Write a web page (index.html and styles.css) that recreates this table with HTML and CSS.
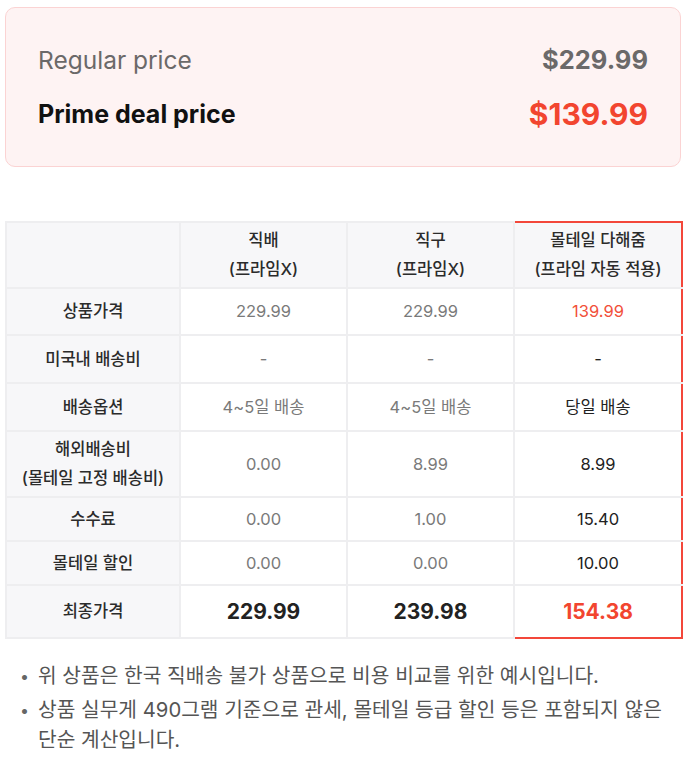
FILE: index.html
```html
<!DOCTYPE html>
<html lang="ko">
<head>
<meta charset="utf-8">
<link rel="stylesheet" href="styles.css">
</head>
<body>
<div class="page">
  <div class="price-box">
    <div class="price-row regular">
      <span class="label">Regular price</span>
      <span class="value">$229.99</span>
    </div>
    <div class="price-row deal">
      <span class="label">Prime deal price</span>
      <span class="value">$139.99</span>
    </div>
  </div>

  <table class="compare">
    <colgroup>
      <col class="c1"><col class="c2"><col class="c3"><col class="c4">
    </colgroup>
    <thead>
      <tr>
        <th class="rh"></th>
        <th>직배<br>(프라임X)</th>
        <th>직구<br>(프라임X)</th>
        <th class="hl">몰테일 다해줌<br>(프라임 자동 적용)</th>
      </tr>
    </thead>
    <tbody>
      <tr class="r1">
        <th class="rh">상품가격</th>
        <td>229.99</td><td>229.99</td><td class="hl red">139.99</td>
      </tr>
      <tr class="r2">
        <th class="rh">미국내 배송비</th>
        <td>-</td><td>-</td><td class="hl">-</td>
      </tr>
      <tr class="r3">
        <th class="rh">배송옵션</th>
        <td>4~5일 배송</td><td>4~5일 배송</td><td class="hl">당일 배송</td>
      </tr>
      <tr class="r4">
        <th class="rh">해외배송비<br>(몰테일 고정 배송비)</th>
        <td>0.00</td><td>8.99</td><td class="hl">8.99</td>
      </tr>
      <tr class="r5">
        <th class="rh">수수료</th>
        <td>0.00</td><td>1.00</td><td class="hl">15.40</td>
      </tr>
      <tr class="r6">
        <th class="rh">몰테일 할인</th>
        <td>0.00</td><td>0.00</td><td class="hl">10.00</td>
      </tr>
      <tr class="r7 total">
        <th class="rh">최종가격</th>
        <td>229.99</td><td>239.98</td><td class="hl red last">154.38</td>
      </tr>
    </tbody>
  </table>

  <ul class="notes">
    <li>위 상품은 한국 직배송 불가 상품으로 비용 비교를 위한 예시입니다.</li>
    <li>상품 실무게 490그램 기준으로 관세, 몰테일 등급 할인 등은 포함되지 않은 단순 계산입니다.</li>
  </ul>
</div>
</body>
</html>
```

FILE: styles.css
```css
* { box-sizing: border-box; }
html, body { margin: 0; padding: 0; background: #ffffff; }
body {
  font-family: Inter, "Noto Sans CJK KR", sans-serif;
  color: #222;
}
.page {
  width: 687px;
  padding: 7px 6px 0 5px;
}
.price-box {
  background: #fef3f3;
  border: 1.5px solid #fbd3d3;
  border-radius: 10px;
  height: 160px;
  padding: 0 32px 0 32px;
  display: flex;
  flex-direction: column;
  justify-content: center;
  gap: 22px;
}
.price-row {
  display: flex;
  justify-content: space-between;
  align-items: center;
  line-height: 32px;
}
.regular .label { font-size: 24.5px; color: #6b6969; font-weight: 400; }
.regular .value { font-size: 25.5px; color: #6b6969; font-weight: 700; }
.deal .label { font-size: 25px; color: #111; font-weight: 700; }
.deal .value { font-size: 30px; color: #f2452f; font-weight: 700; }

.compare {
  margin-top: 54px;
  width: 676px;
  border-collapse: collapse;
  table-layout: fixed;
  font-size: 16.5px;
}
.c1 { width: 174px; }
.c2 { width: 167px; }
.c3 { width: 167px; }
.c4 { width: 168px; }
.compare th, .compare td {
  border: 2px solid #eeeef0;
  text-align: center;
  vertical-align: middle;
  padding: 0 2px;
  line-height: 29px;
}
.compare thead th {
  background: #f7f7f9;
  color: #2b2b2b;
  font-weight: 500;
  height: 66px;
}
.compare th.rh {
  background: #f7f7f9;
  color: #2b2b2b;
  font-weight: 500;
}
.compare td {
  color: #7a7a7a;
  background: #fff;
}
.r1 { height: 47px; }
.r2 { height: 48px; }
.r3 { height: 48px; }
.r4 { height: 66px; }
.r5 { height: 44px; }
.r6 { height: 44px; }
.r7 { height: 53px; }
.compare td.hl { color: #222; }
.compare .hl {
  border-left: 2px solid #f3473a;
  border-right: 2px solid #f3473a;
}
.compare thead th.hl { border-top: 2px solid #f3473a; }
.compare td.last { border-bottom: 2px solid #f3473a; }
.compare td.red { color: #f2503a; }
.total td {
  font-size: 21px;
  font-weight: 700;
  color: #222;
}
.compare .total td.red { color: #f2452f; }

.notes {
  list-style: none;
  margin: 22px 0 0 0;
  padding: 0 0 0 15px;
  font-size: 20.3px;
  line-height: 30px;
  color: #555;
  word-break: keep-all;
}
.notes li {
  position: relative;
  padding-left: 18px;
  margin-bottom: 4px;
}
.notes li::before {
  content: "•";
  position: absolute;
  left: 0;
  top: 0;
  color: #666;
  font-size: 16px;
}
```
